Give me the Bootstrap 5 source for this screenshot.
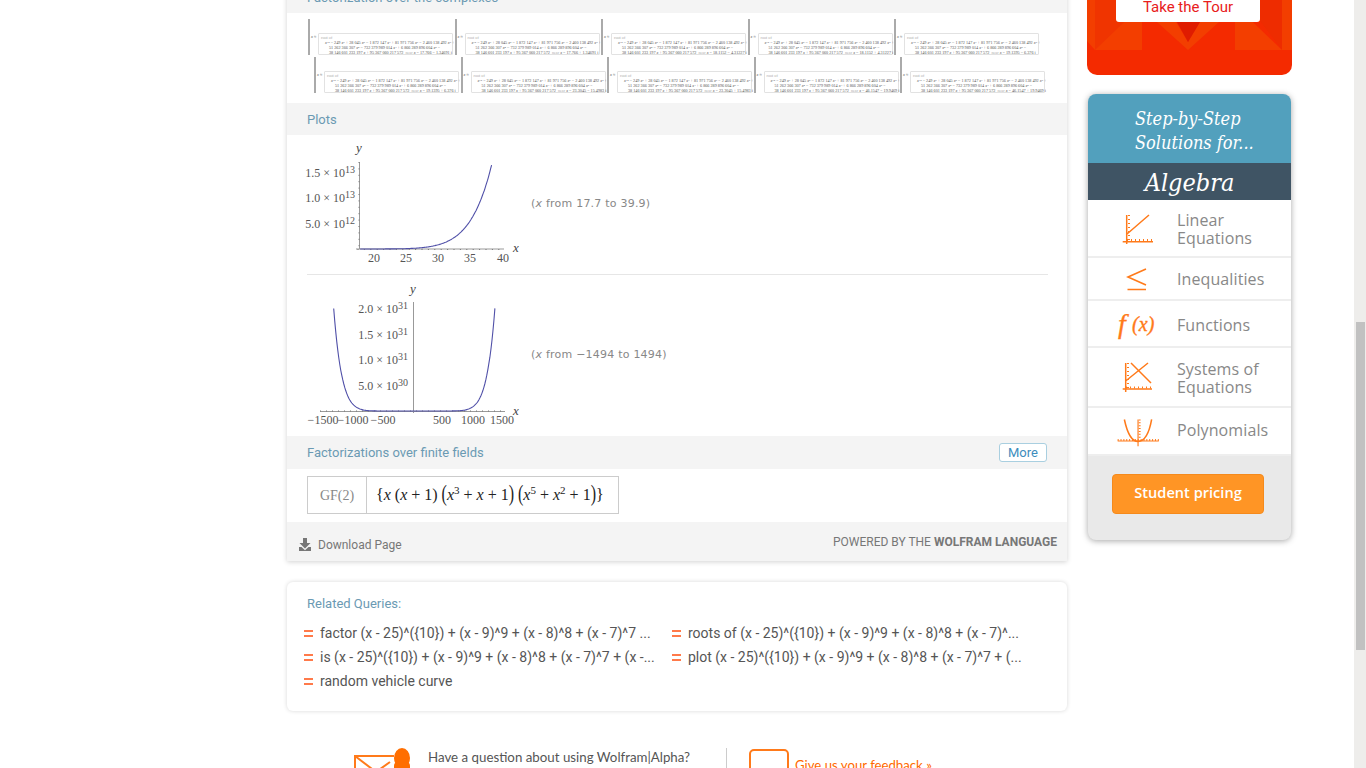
<!DOCTYPE html>
<html lang="en">
<head>
    <meta charset="UTF-8">
    <meta name="viewport" content="width=device-width, initial-scale=1.0">
    <title>Wolfram|Alpha result</title>
    <link href="https://cdn.jsdelivr.net/npm/bootstrap@5.3.2/dist/css/bootstrap.min.css" rel="stylesheet">
    <style>
        html, body { height: 768px; overflow: hidden; background: #fff; font-family: Roboto, "Liberation Sans", sans-serif; }
        .page-wrap { margin-top: -19px; margin-left: 287px; width: 1005px; }
        .main-col { width: 780px; }
        .side-col { width: 205px; }
        .scroll-track { position: fixed; top: 0; right: 0; width: 12px; height: 768px; background: #eeedeb; }
        .scroll-thumb { position: absolute; top: 322px; left: 2px; width: 9px; height: 328px; background: #c1c1c1; }

        .pod-card { box-shadow: 0 1px 5px rgba(0,0,0,.18); }
        .pod-head { height: 32px; padding: 2px 20px 0; background: #f4f4f4; color: #6b9ab3; font-size: 13px; }
        .pod-head-tall { height: 33px; padding-top: 0; }
        .more-btn { width: 48px; height: 19px; padding: 0; background: #fff; border: 1px solid #a9cfe0; border-radius: 3px; color: #3d8dbd; font-size: 13px; line-height: 17px; }
        .roots-body { height: 90px; padding: 6px 0 0 21px; background: #fff; }
        .roots-line { height: 36px; margin-bottom: 2px; }
        .roots-line-b { padding-left: 6px; }
        .root-item { width: 146.5px; height: 36px; flex: none; border-left: 2px solid #aaa; color: #555; font-family: "Liberation Serif", serif; font-size: 4.2px; }
        .root-eq { width: 8px; padding-left: 1px; padding-bottom: 15px; flex: none; align-self: flex-end; }
        .root-box { width: 135px; height: 22px; padding: 1px 0 0 1px; border: 1px solid #e2e2e2; border-radius: 1px; line-height: 5px; white-space: nowrap; }
        .root-box sup { font-size: 2.8px; }
        .root-cap { color: #aaa; padding-left: 1px; }
        .root-l1 { padding-left: 5px; }
        .root-l2 { padding-left: 9px; }
        .plot-area { background: #fff; padding-left: 13px; }
        .plot-a { height: 139px; }
        .plot-b { height: 161px; }
        .plot-rule { height: 1px; margin: 0 19px 0 20px; background: #e6e6e6; }
        .plot-cap { color: #888; font-family: "DejaVu Sans", sans-serif; font-size: 11px; letter-spacing: .22px; }
        .plot-svg text { font-family: "Liberation Serif", serif; font-size: 12px; fill: #555; }
        .plot-svg .sup-txt { font-size: 10px; }
        .plot-svg .var-txt { font-style: italic; font-size: 13px; fill: #444; }
        .gf-body { height: 53px; padding: 7px 20px 0; background: #fff; }
        .gf-wrap { width: 312px; height: 38px; border: 1px solid #ccc; font-family: "Liberation Serif", serif; }
        .gf-name { width: 59px; border-right: 1px solid #ccc; color: #888; font-size: 14px; }
        .gf-math { padding-left: 9px; color: #222; font-size: 16px; white-space: nowrap; }
        .gf-math i { font-style: italic; }
        .gf-math sup { font-size: 11px; top: -.55em; }
        .big-par { display: inline-block; transform: scaleY(1.5); transform-origin: 50% 60%; }
        .pod-foot { height: 39px; padding: 0 10px 0 12px; background: #f4f4f4; font-size: 12px; color: #777; }
        .dl-link { padding-top: 6px; gap: 7px; }

        .rel-card { height: 129px; margin-top: 21px; padding: 14px 17px 0; border-radius: 6px; box-shadow: 0 0 4px rgba(0,0,0,.16); }
        .rel-title { margin-left: 3px; margin-bottom: 9px; color: #6b9ab3; font-size: 13px; line-height: 16px; }
        .rel-item { width: 368px; height: 24px; color: #555; font-size: 14px; line-height: 24px; white-space: nowrap; }
        .rel-mark { width: 9px; height: 7px; margin-right: 7px; flex: none; border-top: 2.5px solid #ff7a4a; border-bottom: 2.5px solid #ff7a4a; }

        .help-row { margin-top: 37px; height: 40px; padding-left: 67px; }
        .help-icon { width: 57px; height: 40px; flex: none; }
        .help-text { width: 315px; padding: 0 0 0 17px; color: #555; font-family: Lato, "Open Sans", sans-serif; font-size: 13.3px; line-height: 18px; white-space: nowrap; }
        .help-rule { width: 1px; height: 40px; flex: none; background: #ccc; }
        .fb-box { width: 40px; height: 40px; margin: 1px 6px 0 22px; flex: none; border: 2px solid #ff7a1a; border-radius: 5px; }
        .fb-link { padding-top: 8px; color: #ff6a00; font-family: Lato, "Open Sans", sans-serif; font-size: 13.2px; text-decoration: none; }

        .tour-card { height: 94px; background: #f42a00; border-radius: 0 0 10px 10px; overflow: hidden; }
        .tour-btn { position: absolute; top: 0; left: 29px; width: 144px; height: 41px; padding: 11px 0 0; background: #fff; border: 0; border-radius: 0 0 3px 3px; color: #e8201b; font-size: 15px; line-height: 20px; }
        .step-card { width: 203px; margin: 19px 0 0 1px; border-radius: 8px; overflow: hidden; background: #e9e9e9; box-shadow: 0 1px 6px rgba(0,0,0,.35); }
        .step-top { height: 69px; padding: 13px 0 0 47px; background: #52a0bd; color: #fff; font-family: "DejaVu Serif Condensed", "DejaVu Serif", serif; font-style: italic; font-size: 18px; line-height: 24px; }
        .step-name { height: 37px; padding-top: 2px; background: #3f5464; color: #fff; font-family: "DejaVu Serif Condensed", "DejaVu Serif", serif; font-style: italic; font-size: 25px; line-height: 35px; text-align: center; }
        .step-row { background: #fff; border-bottom: 2px solid #eee; color: #888; font-family: "Open Sans", sans-serif; font-size: 16px; line-height: 18px; letter-spacing: .1px; }
        .step-row:last-child { border-bottom: 0; }
        .row-a { height: 58px; padding-top: 1px; }
        .row-b { height: 43px; }
        .row-c { height: 47px; padding-top: 2px; }
        .row-d { height: 60px; padding-top: 1px; }
        .row-e { height: 48px; padding-bottom: 2px; }
        .step-icon { width: 89px; flex: none; align-self: stretch; }
        .step-icon text { font-family: "Liberation Serif", serif; font-style: italic; fill: #ff7a1a; stroke: #ff7a1a; stroke-width: .35px; }
        .step-foot { height: 84px; padding: 18px 0 0 24px; }
        .price-btn { width: 152px; height: 40px; padding: 0 0 2px; background: #ff9525; border: 1px solid #f58a1c; border-radius: 4px; color: #fff; font-family: "Open Sans", sans-serif; font-size: 14.6px; font-weight: 600; }
    </style>
</head>
<body>

    <div class="page-wrap d-flex gap-3 justify-content-between">
        <div class="main-col">
            <div class="pod-card">
                <div class="pod-head d-flex align-items-center">Factorization over the complexes</div>
                <div class="roots-body">
                    <div id="rootsA" class="roots-line d-flex"></div>
                    <div id="rootsB" class="roots-line roots-line-b d-flex"></div>
                </div>

                <div class="pod-head d-flex align-items-center">Plots</div>
                <div class="plot-area">
                    <div class="plot-a d-flex align-items-center">
                        <svg class="plot-svg flex-none" width="231" height="139" viewBox="300 135 231 139">
                            <path d="M359.5 162V249M356 249H504" stroke="#999" fill="none"/>
                            <path d="M357.5 249.5H504M359 162V249" stroke="#777" stroke-dasharray="1 5.4" fill="none"/>
                            <text x="355" y="177" text-anchor="end">1.5 × 10<tspan class="sup-txt" dy="-4">13</tspan></text>
                            <text x="355" y="202" text-anchor="end">1.0 × 10<tspan class="sup-txt" dy="-4">13</tspan></text>
                            <text x="355" y="228" text-anchor="end">5.0 × 10<tspan class="sup-txt" dy="-4">12</tspan></text>
                            <text x="374" y="262" text-anchor="middle">20</text>
                            <text x="406" y="262" text-anchor="middle">25</text>
                            <text x="438" y="262" text-anchor="middle">30</text>
                            <text x="470" y="262" text-anchor="middle">35</text>
                            <text x="503" y="262" text-anchor="middle">40</text>
                            <text class="var-txt" x="356" y="152">y</text>
                            <text class="var-txt" x="513" y="252">x</text>
                            <polyline id="curveA" fill="none" stroke="#5050a8" stroke-width="1.1"/>
                        </svg>
                        <div class="plot-cap">(<i>x</i> from 17.7 to 39.9)</div>
                    </div>
                </div>
                <div class="plot-area p-0"><div class="plot-rule"></div></div>
                <div class="plot-area">
                    <div class="plot-b d-flex align-items-center">
                        <svg class="plot-svg flex-none" width="231" height="161" viewBox="300 275 231 161">
                            <path d="M413.5 302V413M320 411.5H505" stroke="#999" fill="none"/>
                            <path d="M320 411H505" stroke="#777" stroke-dasharray="1 5" fill="none"/>
                            <text x="408" y="313" text-anchor="end">2.0 × 10<tspan class="sup-txt" dy="-4">31</tspan></text>
                            <text x="408" y="339" text-anchor="end">1.5 × 10<tspan class="sup-txt" dy="-4">31</tspan></text>
                            <text x="408" y="364" text-anchor="end">1.0 × 10<tspan class="sup-txt" dy="-4">31</tspan></text>
                            <text x="408" y="390" text-anchor="end">5.0 × 10<tspan class="sup-txt" dy="-4">30</tspan></text>
                            <text x="323" y="424" text-anchor="middle">−1500</text>
                            <text x="353" y="424" text-anchor="middle">−1000</text>
                            <text x="383" y="424" text-anchor="middle">−500</text>
                            <text x="442" y="424" text-anchor="middle">500</text>
                            <text x="473" y="424" text-anchor="middle">1000</text>
                            <text x="502" y="424" text-anchor="middle">1500</text>
                            <text class="var-txt" x="410" y="293">y</text>
                            <text class="var-txt" x="513" y="415">x</text>
                            <polyline id="curveB" fill="none" stroke="#5050a8" stroke-width="1.1"/>
                        </svg>
                        <div class="plot-cap">(<i>x</i> from −1494 to 1494)</div>
                    </div>
                </div>

                <div class="pod-head pod-head-tall d-flex align-items-center justify-content-between">
                    <span>Factorizations over finite fields</span>
                    <button class="btn more-btn">More</button>
                </div>
                <div class="gf-body">
                    <div class="gf-wrap d-flex">
                        <div class="gf-name d-flex align-items-center justify-content-center">GF(2)</div>
                        <div class="gf-math d-flex align-items-center">
                            <span>{<i>x</i> (<i>x</i> + 1) <span class="big-par">(</span><i>x</i><sup>3</sup> + <i>x</i> + 1<span class="big-par">)</span> <span class="big-par">(</span><i>x</i><sup>5</sup> + <i>x</i><sup>2</sup> + 1<span class="big-par">)</span>}</span>
                        </div>
                    </div>
                </div>
                <div class="pod-foot d-flex align-items-center justify-content-between">
                    <div class="dl-link d-flex align-items-center">
                        <svg width="12" height="13" viewBox="0 0 12 13"><path d="M4 0H8V5H11.5L6 10.5L.5 5H4ZM0 9H2.5L6 12.2L9.5 9H12V13H0Z" fill="#777"/></svg>
                        <span>Download Page</span>
                    </div>
                    <div>POWERED BY THE <strong>WOLFRAM LANGUAGE</strong></div>
                </div>
            </div>

            <div class="rel-card">
                <div class="rel-title">Related Queries:</div>
                <div class="d-flex flex-wrap">
                    <div class="rel-item d-flex align-items-center"><span class="rel-mark"></span>factor (x - 25)^({10}) + (x - 9)^9 + (x - 8)^8 + (x - 7)^7 ...</div>
                    <div class="rel-item d-flex align-items-center"><span class="rel-mark"></span>roots of (x - 25)^({10}) + (x - 9)^9 + (x - 8)^8 + (x - 7)^...</div>
                    <div class="rel-item d-flex align-items-center"><span class="rel-mark"></span>is (x - 25)^({10}) + (x - 9)^9 + (x - 8)^8 + (x - 7)^7 + (x -...</div>
                    <div class="rel-item d-flex align-items-center"><span class="rel-mark"></span>plot (x - 25)^({10}) + (x - 9)^9 + (x - 8)^8 + (x - 7)^7 + (...</div>
                    <div class="rel-item d-flex align-items-center"><span class="rel-mark"></span>random vehicle curve</div>
                </div>
            </div>

            <div class="help-row d-flex">
                <svg class="help-icon" viewBox="0 0 57 40">
                    <path d="M1 40V8H40M1 8L22 24L36 14" stroke="#ff7a1a" stroke-width="2" fill="none"/>
                    <ellipse cx="48" cy="10" rx="8" ry="10" fill="#ff6e00"/>
                    <rect x="40" y="14" width="16" height="26" rx="4" fill="#ff6e00"/>
                </svg>
                <div class="help-text">Have a question about using Wolfram|Alpha?</div>
                <div class="help-rule"></div>
                <div class="fb-box"></div>
                <a class="fb-link" href="#">Give us your feedback »</a>
            </div>
        </div>

        <div class="side-col">
            <div class="tour-card position-relative">
                <svg class="d-block" width="205" height="69" viewBox="0 0 205 69">
                    <rect width="205" height="69" fill="#f42a00"/>
                    <path d="M0 0H55V69H8L0 60Z" fill="#f33e00"/>
                    <path d="M8 7H55V69H8Z" fill="#f03400"/>
                    <path d="M8 69L55 24V69Z" fill="#f33e00"/>
                    <path d="M148 0H205V69H195V7H148Z" fill="#f33e00"/>
                    <path d="M148 7H195V69Z" fill="#ee2c00"/>
                    <path d="M148 24V69H195Z" fill="#f33e00"/>
                    <path d="M70 41L101 69L132 41H113L101 61L89 41Z" fill="#f33e00"/>
                    <path d="M90 41H113L101 61Z" fill="#df1c00"/>
                </svg>
                <button class="btn tour-btn">Take the Tour</button>
            </div>

            <div class="step-card">
                <div class="step-top">Step-by-Step<br>Solutions for...</div>
                <div class="step-name">Algebra</div>
                <div class="step-row row-a d-flex align-items-center">
                    <svg class="step-icon" viewBox="1088 201 89 55">
                        <path d="M1126.7 215V244M1122.7 241.7H1153M1127 234L1149 215" stroke="#ff7a1a" stroke-width="1.5" fill="none"/>
                        <path d="M1129 215V241M1127 240H1153" stroke="#ff7a1a" stroke-width="2" stroke-dasharray="1 3" fill="none"/>
                    </svg>
                    <div>Linear<br>Equations</div>
                </div>
                <div class="step-row row-b d-flex align-items-center">
                    <svg class="step-icon" viewBox="1088 258 89 41">
                        <path d="M1146 269L1128 277L1146 285M1127.5 289.5H1146" stroke="#ff7a1a" stroke-width="1.6" fill="none"/>
                    </svg>
                    <div>Inequalities</div>
                </div>
                <div class="step-row row-c d-flex align-items-center">
                    <svg class="step-icon" viewBox="1088 303 89 43">
                        <text x="1118" y="333" font-size="28">f</text>
                        <text x="1132" y="331" font-size="20">(x)</text>
                    </svg>
                    <div>Functions</div>
                </div>
                <div class="step-row row-d d-flex align-items-center">
                    <svg class="step-icon" viewBox="1088 349 89 57">
                        <path d="M1125.7 363V392M1122.7 389H1152M1125.7 381L1148 363M1131 363L1151 383" stroke="#ff7a1a" stroke-width="1.5" fill="none"/>
                        <path d="M1128 363V388M1126 387.5H1152" stroke="#ff7a1a" stroke-width="2" stroke-dasharray="1 3" fill="none"/>
                    </svg>
                    <div>Systems of<br>Equations</div>
                </div>
                <div class="step-row row-e d-flex align-items-center">
                    <svg class="step-icon" viewBox="1088 408 89 46">
                        <path d="M1138.3 420V448M1117 442.5H1160" stroke="#ff7a1a" stroke-width="1.2" fill="none"/>
                        <path d="M1117 441.5H1160M1140 420V441" stroke="#ff7a1a" stroke-width="2" stroke-dasharray="1 2" fill="none"/>
                        <path d="M1124 420C1127 434 1132 443 1138.3 443C1145 443 1150 434 1152.5 420" stroke="#ff7a1a" stroke-width="1.6" fill="none"/>
                    </svg>
                    <div>Polynomials</div>
                </div>
                <div class="step-foot">
                    <button class="btn price-btn">Student pricing</button>
                </div>
            </div>
        </div>
    </div>

    <div class="scroll-track"><div class="scroll-thumb"></div></div>

    <script>
        const ROOTS_A = ["17.766 − 1.34691 i", "17.766 + 1.34691 i", "18.1152 − 4.31227 i", "18.1152 + 4.31227 i", "19.1395 − 6.376 i"];
        const ROOTS_B = ["19.1395 + 6.376 i", "23.3045 − 15.4983 i", "23.3045 + 15.4983 i", "46.1547 − 19.9469 i", "46.1547 + 19.9469 i"];

        function rootItem(value) {
            return `
                <div class="root-item d-flex">
                    <div class="root-eq"><i>x</i> ≈</div>
                    <div class="root-box align-self-end">
                        <div class="root-cap">root of</div>
                        <div class="root-l1"><i>x</i><sup>10</sup> − 249 <i>x</i><sup>9</sup> + 28 045 <i>x</i><sup>8</sup> − 1 872 147 <i>x</i><sup>7</sup> + 81 971 756 <i>x</i><sup>6</sup> − 2 460 138 492 <i>x</i><sup>5</sup> +</div>
                        <div class="root-l2">51 262 366 307 <i>x</i><sup>4</sup> − 732 379 989 014 <i>x</i><sup>3</sup> + 6 866 289 896 604 <i>x</i><sup>2</sup> −</div>
                        <div class="root-l2">38 146 601 233 197 <i>x</i> + 95 367 060 217 572 <span class="root-cap">near</span> <i>x</i> = ${value}</div>
                    </div>
                </div>`;
        }

        document.getElementById("rootsA").innerHTML = ROOTS_A.map(rootItem).join("");
        document.getElementById("rootsB").innerHTML = ROOTS_B.map(rootItem).join("");

        function poly(x) {
            return Math.pow(x - 25, 10) + Math.pow(x - 9, 9) + Math.pow(x - 8, 8) + Math.pow(x - 7, 7);
        }

        function curvePoints(from, to, toX, toY) {
            const points = [];
            for (let i = 0; i <= 160; i++) {
                const x = from + (to - from) * i / 160;
                points.push(toX(x).toFixed(1) + "," + toY(poly(x)).toFixed(1));
            }
            return points.join(" ");
        }

        document.getElementById("curveA").setAttribute("points",
            curvePoints(17.77, 38.25, x => 374.4 + (x - 20) * 6.42, y => 249 - y / 5e12 * 25.3));
        document.getElementById("curveB").setAttribute("points",
            curvePoints(-1325, 1375, x => 412.8 + x * 0.0597, y => 411 - y / 5e30 * 25.5));
    </script>

</body>
</html>
